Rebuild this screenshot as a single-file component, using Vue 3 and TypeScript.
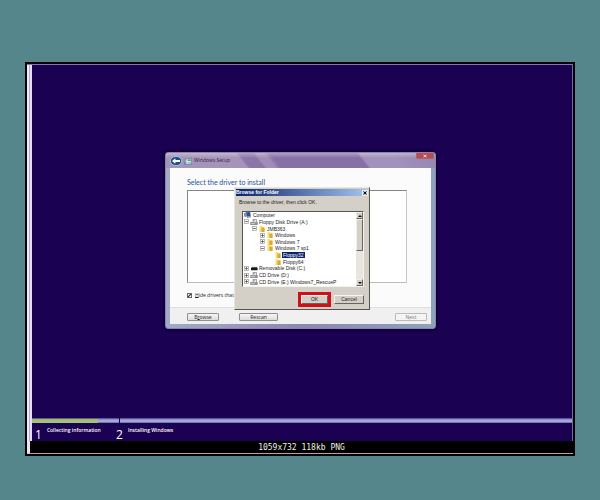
<script setup lang="ts">
import { ref } from 'vue'

interface Node {
  label: string
  level: number
  icon: 'computer' | 'drive' | 'disk' | 'folder'
  toggle: '' | '+' | '-'
}

const nodes: Node[] = [
  { label: 'Computer', level: 0, icon: 'computer', toggle: '' },
  { label: 'Floppy Disk Drive (A:)', level: 1, icon: 'drive', toggle: '-' },
  { label: 'JMB363', level: 2, icon: 'folder', toggle: '-' },
  { label: 'Windows', level: 3, icon: 'folder', toggle: '+' },
  { label: 'Windows 7', level: 3, icon: 'folder', toggle: '+' },
  { label: 'Windows 7 sp1', level: 3, icon: 'folder', toggle: '-' },
  { label: 'Floppy32', level: 4, icon: 'folder', toggle: '' },
  { label: 'Floppy64', level: 4, icon: 'folder', toggle: '' },
  { label: 'Removable Disk (C:)', level: 1, icon: 'disk', toggle: '+' },
  { label: 'CD Drive (D:)', level: 1, icon: 'drive', toggle: '+' },
  { label: 'CD Drive (E:) Windows7_RescueP', level: 1, icon: 'drive', toggle: '+' },
]

const selected = ref('Floppy32')
const hideDrivers = ref(true)
</script>

<template>
  <main class="page">
    <div class="frame">
      <div class="screen">
        <div class="desktop">
          <section class="window">
            <header class="titlebar">
              <svg class="back" viewBox="0 0 12 10">
                <ellipse cx="6" cy="5" rx="5.6" ry="4.6" fill="#1d4f86" stroke="#b9cde4" stroke-width=".8" />
                <path d="M2 5 5.4 2.2V4H10V6H5.4V7.8Z" fill="#fff" />
              </svg>
              <svg class="setup-icon" viewBox="0 0 8 8">
                <path d="M1 2.5 7.4 1V7.5H1Z" fill="#a5c3c9" stroke="#5f7c99" stroke-width=".6" />
                <path d="M3 2 3 7M3 4.5H7" stroke="#e7f2ee" stroke-width=".8" />
                <path d="M3.8 2.6H6.5V4H3.8Z" fill="#569a8a" />
                <path d="M0 5H2V8H0Z" fill="#668db4" />
              </svg>
              <span class="caption">Windows Setup</span>
              <button class="close" aria-label="Close">
                <svg viewBox="0 0 6 4"><path d="M1.5 .8 4.5 3.2M4.5 .8 1.5 3.2" stroke="#f3dede" stroke-width="1" /></svg>
              </button>
            </header>

            <div class="content">
              <h1>Select the driver to install</h1>
              <div class="drivers"></div>
              <label class="check">
                <input v-model="hideDrivers" type="checkbox" />
                <span><u>H</u>ide drivers that are</span>
              </label>
            </div>
            <footer class="actions">
              <button class="btn browse">B<u>r</u>owse</button>
              <button class="btn rescan"><u>R</u>escan</button>
              <button class="btn next" disabled><u>N</u>ext</button>
            </footer>

            <section class="dialog">
              <header class="dialog-title">
                <span>Browse for Folder</span>
                <button class="dialog-close" aria-label="Close dialog">
                  <svg viewBox="0 0 6 6"><path d="M1.5 1.5 4.5 4.5M4.5 1.5 1.5 4.5" stroke="#111" stroke-width="1" /></svg>
                </button>
              </header>
              <p class="hint">Browse to the driver, then click OK.</p>
              <div class="tree">
                <ul class="nodes">
                  <li
                    v-for="node in nodes"
                    :key="node.label"
                    :class="['node', 'level-' + node.level, { selected: node.label === selected }]"
                    @click="selected = node.label"
                  >
                    <svg v-if="node.level" class="toggle" viewBox="0 0 5 5">
                      <template v-if="node.toggle">
                        <rect x=".5" y=".5" width="4" height="4" fill="#fff" stroke="#9a9a9a" stroke-width=".7" />
                        <path d="M1.2 2.5H3.8" stroke="#444" stroke-width=".8" />
                        <path v-if="node.toggle === '+'" d="M2.5 1.2V3.8" stroke="#444" stroke-width=".8" />
                      </template>
                    </svg>
                    <svg v-if="node.icon === 'folder'" class="icon" viewBox="0 0 8 6">
                      <path d="M1.5 .3H4L4.5 1H6.5V6H1.5Z" fill="#f2d469" />
                      <path d="M3.5 1.8H6.5V6H3.5Z" fill="#dba92c" />
                      <path d="M2 1V5.6" stroke="#fff0ac" stroke-width=".8" />
                    </svg>
                    <svg v-else-if="node.icon === 'computer'" class="icon" viewBox="0 0 8 6">
                      <path d="M0 1 2 .5V5L0 4.5Z" fill="#8290a8" />
                      <path d="M2 .3 6 0 6.6 4 2.6 4.8Z" fill="#2948a8" stroke="#7b8496" stroke-width=".4" />
                      <path d="M3 5.5 7 4.6" stroke="#777" stroke-width=".9" />
                    </svg>
                    <svg v-else-if="node.icon === 'disk'" class="icon" viewBox="0 0 8 6">
                      <path d="M1 3 2 2.2H7L7.6 3V5.2H1Z" fill="#161616" />
                      <path d="M2 2.2H7" stroke="#777" stroke-width=".5" />
                    </svg>
                    <svg v-else class="icon" viewBox="0 0 8 6">
                      <path d="M.6 3.5H7.4V5.5H.6Z" fill="#c9c9c9" stroke="#606060" stroke-width=".6" />
                      <path d="M3 .4H6.5V3.6H3Z" fill="#e4e6ea" stroke="#777" stroke-width=".6" />
                      <path d="M4 .6V2M5.3 4.6H6.6" stroke="#444" stroke-width=".6" />
                    </svg>
                    <span class="name">{{ node.label }}</span>
                  </li>
                </ul>
                <div class="scroll">
                  <button class="arrow" aria-label="Scroll up">
                    <svg viewBox="0 0 6 6"><path d="M1 4 3 2 5 4Z" fill="#111" /></svg>
                  </button>
                  <div class="thumb"></div>
                  <div class="track"></div>
                  <button class="arrow" aria-label="Scroll down">
                    <svg viewBox="0 0 6 6"><path d="M1 2 3 4 5 2Z" fill="#111" /></svg>
                  </button>
                </div>
              </div>
              <div class="dialog-actions">
                <div class="highlight"><button class="classic">OK</button></div>
                <button class="classic cancel">Cancel</button>
              </div>
            </section>
          </section>
        </div>

        <div class="progress">
          <div class="bar first"><div class="done"></div></div>
          <div class="bar"></div>
        </div>
        <ol class="steps">
          <li><b>1</b><span>Collecting information</span></li>
          <li><b>2</b><span>Installing Windows</span></li>
        </ol>
      </div>
      <div class="info">1059x732 118kb PNG</div>
    </div>
  </main>
</template>

<style>
body {
  margin: 0;
  background: #54868c;
}
</style>

<style scoped>
* {
  box-sizing: border-box;
}
.page {
  min-height: 100vh;
  padding: 62px 25px 44px;
  display: flex;
  background: #54868c;
  font-family: 'Open Sans', 'Noto Sans', sans-serif;
  font-size: 5px;
  line-height: 7px;
  color: #222;
}
button {
  font: inherit;
  padding: 0;
  margin: 0;
  border: 0;
  display: flex;
  align-items: center;
  justify-content: center;
}
u {
  text-decoration-thickness: 1px;
  text-underline-offset: 0;
}
.frame {
  flex: 1;
  display: flex;
  flex-direction: column;
  border: 2px solid #030208;
  background: #000;
}
.screen {
  flex: 1;
  display: flex;
  flex-direction: column;
  padding-left: 5px;
  border-top: 1px solid #8579a4;
  border-right: 1px solid #75699c;
  background: linear-gradient(90deg, #f3ecf8 0 2px, #b9abd6 2px 3px, #e4dcf5 3px 5px, #1a0152 5px);
}
.desktop {
  flex: 1;
  display: flex;
  justify-content: center;
  padding: 87px 3px 0 0;
}
.window {
  position: relative;
  width: 271px;
  height: 177px;
  display: flex;
  flex-direction: column;
  padding: 0 4px 4px;
  border: 1px solid #8a86a8;
  border-radius: 3px;
  background: linear-gradient(90deg, #a3abc9, #8d86b4 50%, #8ba3bd);
  box-shadow: 0 0 3px 1px #0c0030;
}
.titlebar {
  height: 15px;
  margin: 0 -4px;
  padding: 0 1px 0 4px;
  display: flex;
  align-items: center;
  border-radius: 2px 2px 0 0;
  background:
    linear-gradient(180deg, #ffffff55, #ffffff00 5px),
    linear-gradient(52deg, #a593b8 0 29%, #8c76a7 30% 35%, #a18db9 36% 39%, #8670a6 41% 72%, #a290bd 73% 84%, #9586b1 100%);
}
.back {
  width: 12px;
  height: 10px;
}
.setup-icon {
  width: 8px;
  height: 8px;
  margin: 0 2px;
}
.caption {
  flex: 1;
  color: #302247;
}
.close {
  align-self: flex-start;
  width: 18px;
  height: 6px;
  border: 1px solid #a56272;
  border-top: 0;
  border-radius: 0 0 2px 2px;
  background: #bd4a50;
}
.close svg {
  width: 6px;
  height: 4px;
}
.content {
  flex: 1;
  display: flex;
  flex-direction: column;
  padding: 10px 24px 8px 17px;
  background: #fbfbfc;
}
h1 {
  margin: 0 0 3px;
  font-family: Lato, sans-serif;
  font-size: 7px;
  line-height: 9px;
  font-weight: 400;
  color: #2c5194;
}
.drivers {
  flex: 1;
  border: 1px solid #858585;
  border-right-color: #c9c9c9;
  border-bottom-color: #bbb;
  background: #fff;
}
.check {
  display: flex;
  align-items: center;
  gap: 3px;
  margin-top: 9px;
}
.check input {
  appearance: none;
  width: 5px;
  height: 5px;
  margin: 0;
  border: 1px solid #666;
  background: linear-gradient(135deg, #fff 30%, #333 40% 60%, #fff 70%);
}
.actions {
  height: 17px;
  display: flex;
  align-items: center;
  padding: 2px 4px 0 17px;
  border-top: 1px solid #dedede;
  background: #f0f0f0;
}
.btn {
  width: 32px;
  height: 8px;
  border: 1px solid #8f8f8f;
  border-radius: 1px;
  background: linear-gradient(#f6f6f6, #dcdcdc);
  color: #222;
}
.rescan {
  width: 39px;
  margin-left: 20px;
}
.next {
  margin-left: auto;
  border-color: #bbb;
  background: #f4f4f4;
  color: #777;
}
.dialog {
  position: absolute;
  left: 68px;
  top: 34px;
  width: 136px;
  height: 123px;
  display: flex;
  flex-direction: column;
  padding: 1px;
  border: 1px solid #e9e6df;
  border-right-color: #55524d;
  border-bottom-color: #55524d;
  background: #d4d0c8;
  font-family: 'Liberation Sans', sans-serif;
}
.dialog-title {
  height: 7px;
  display: flex;
  align-items: center;
  justify-content: space-between;
  background: linear-gradient(90deg, #0b246a, #a3c5ee);
  color: #fff;
  font-weight: 700;
}
.dialog-close {
  width: 6px;
  height: 6px;
  border: 1px solid #eee;
  background: #c8c4bd;
}
.dialog-close svg {
  width: 6px;
  height: 6px;
  flex: none;
}
.hint {
  margin: 3px 0 5px 3px;
}
.tree {
  height: 76px;
  display: flex;
  margin: 0 4px 0 6px;
  border: 1px solid #555;
  border-right-color: #f4f2ed;
  border-bottom-color: #f4f2ed;
  background: #fff;
}
.nodes {
  flex: 1;
  display: grid;
  grid-template-rows: repeat(11, 1fr);
  margin: 0;
  padding: 0 0 1px 1px;
  list-style: none;
}
.node {
  display: flex;
  align-items: center;
  min-height: 0;
  white-space: nowrap;
}
.level-2 {
  padding-left: 8px;
}
.level-3 {
  padding-left: 16px;
}
.level-4 {
  padding-left: 24px;
}
.toggle {
  width: 5px;
  height: 5px;
  margin-right: 1px;
}
.icon {
  width: 8px;
  height: 6px;
}
.name {
  line-height: 6px;
  padding: 0 1px;
}
.selected .name {
  background: #0a246a;
  color: #fff;
}
.scroll {
  width: 7px;
  display: flex;
  flex-direction: column;
  background: #e8e5df;
}
.arrow,
.thumb {
  height: 7px;
  border: 1px solid #f1efea;
  border-right-color: #666;
  border-bottom-color: #666;
  background: #d4d0c8;
}
.arrow svg {
  width: 6px;
  height: 6px;
  flex: none;
}
.thumb {
  height: 32px;
}
.track {
  flex: 1;
}
.dialog-actions {
  display: flex;
  justify-content: flex-end;
  align-items: center;
  gap: 3px;
  margin: 5px 4px 0 0;
}
.highlight {
  display: flex;
  border: 3px solid #cf1018;
}
.classic {
  width: 27px;
  height: 9px;
  border: 1px solid #f6f4ef;
  border-right-color: #68655f;
  border-bottom-color: #68655f;
  background: #d4d0c8;
  color: #222;
}
.cancel {
  width: 30px;
}
.progress {
  display: flex;
  gap: 1px;
}
.bar {
  flex: 1;
  height: 5px;
  border-top: 1px solid #5d55a0;
  background: linear-gradient(#8c8cc8 0 1px, #a5a9d8 1px 3px, #7777b6 3px);
}
.first {
  flex: 0 0 87px;
}
.done {
  width: 66px;
  height: 4px;
  background: linear-gradient(#a0bd66, #a9c77a);
}
.steps {
  display: flex;
  height: 18px;
  margin: 0;
  padding: 0 0 0 3px;
  list-style: none;
  color: #fff;
}
.steps li {
  display: flex;
  width: 81px;
  gap: 5px;
  line-height: 14px;
  white-space: nowrap;
}
.steps span {
  font-weight: 600;
}
.steps b {
  font-size: 12px;
  line-height: 24px;
  font-weight: 400;
}
.info {
  height: 13px;
  border-bottom: 1px solid #bd9da6;
  border-left: 3px solid #efe4ee;
  background: #000;
  color: #eee;
  font: 8px/14px 'DejaVu Sans Mono', monospace;
  text-align: center;
}
</style>
